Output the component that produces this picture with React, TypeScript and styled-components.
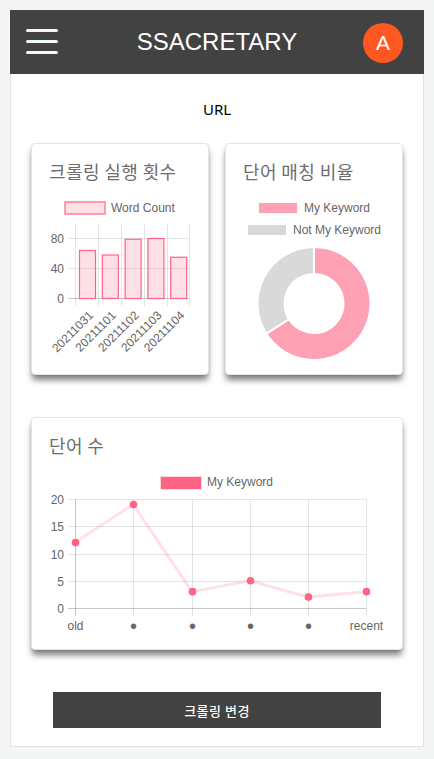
import React from "react";
import styled, { createGlobalStyle } from "styled-components";

const GlobalStyle = createGlobalStyle`
  html, body { margin: 0; padding: 0; background: #f4f5f5; }
  body { padding: 10px; font-family: "Liberation Sans", Arial, sans-serif; }
  * { box-sizing: border-box; }
`;

const Frame = styled.div`
  width: 414px;
  background: #fff;
  border: 1px solid #e2e3e3;
  border-top: none;
  display: flex;
  flex-direction: column;
`;

const Header = styled.header`
  height: 64px;
  background: #424242;
  margin: 0 -1px;
  display: flex;
  align-items: center;
  justify-content: space-between;
  padding: 0 21px 0 16px;
  position: relative;
`;

const Burger = styled.div`
  width: 32px;
  display: flex;
  flex-direction: column;
  gap: 8px;
  margin-top: -1px;
`;

const BurgerLine = styled.span`
  display: block;
  height: 3px;
  border-radius: 2px;
  background: #eefafa;
`;

const Brand = styled.h1`
  position: absolute;
  left: 0;
  right: 0;
  text-align: center;
  margin: 0;
  font-family: "Liberation Sans", Arial, sans-serif;
  font-weight: 400;
  font-size: 24px;
  color: #fff;
  pointer-events: none;
`;

const Avatar = styled.div`
  width: 40px;
  height: 40px;
  border-radius: 50%;
  background: #ff5722;
  color: #fff;
  display: flex;
  align-items: center;
  justify-content: center;
  font-family: "Liberation Sans", Arial, sans-serif;
  font-size: 21px;
  margin-top: 1px;
`;

const Content = styled.main`
  padding: 25px 20px 18px;
  display: flex;
  flex-direction: column;
`;

const UrlText = styled.div`
  text-align: center;
  font-family: "Noto Sans", "Open Sans", sans-serif;
  font-size: 15px;
  line-height: 20px;
  color: #000;
`;

const Row = styled.div`
  display: grid;
  grid-template-columns: 178px 178px;
  gap: 16px;
  margin-top: 24px;
`;

const Card = styled.section<{ $height: number; $mt?: number }>`
  height: ${(p) => p.$height}px;
  margin-top: ${(p) => p.$mt ?? 0}px;
  background: #fff;
  border: 1px solid #e4e4e4;
  border-radius: 4px;
  box-shadow: 0 6px 6px -1px rgba(0, 0, 0, 0.5), 0 1px 2px rgba(0, 0, 0, 0.08);
  padding-top: 15px;
  display: flex;
  flex-direction: column;
  overflow: visible;
`;

const CardTitle = styled.h2`
  margin: 0 0 12px 17px;
  font-family: "Noto Sans CJK KR", "Noto Sans", sans-serif;
  font-weight: 400;
  font-size: 18px;
  line-height: 24px;
  color: #6e6e6e;
  letter-spacing: 0.4px;
`;

const ChartSvg = styled.svg`
  display: block;
  margin-left: -1px;
  font-family: "Liberation Sans", Arial, sans-serif;
  font-size: 12px;
  overflow: visible;
`;

const Button = styled.button`
  margin: 42px 22px 0;
  height: 36px;
  border: none;
  background: #424242;
  color: #fff;
  font-family: "Noto Sans CJK KR", "Noto Sans", sans-serif;
  font-size: 13px;
  font-weight: 500;
  letter-spacing: 0.5px;
  cursor: pointer;
`;

const TXT = "#666";
const GRID = "rgba(0,0,0,0.1)";
const AXIS = "rgba(0,0,0,0.22)";
const PINK = "#ff6384";
const PINK_LIGHT = "rgba(255,99,132,0.2)";

function BarChart() {
  const vals = [64, 58, 79, 80, 55];
  const labels = ["20211031", "20211101", "20211102", "20211103", "20211104"];
  const vx = [44, 67, 90, 113, 136, 158];
  const base = 103;
  const k = 60 / 80;
  return (
    <ChartSvg width={178} height={180}>
      <rect x={34} y={7} width={40} height={12} fill={PINK_LIGHT} stroke={PINK} strokeOpacity={0.6} strokeWidth={2} />
      <text x={80} y={17} fill={TXT}>Word Count</text>
      {[0, 40, 80].map((v) => {
        const y = base - v * k;
        return (
          <g key={v}>
            <line x1={37} x2={158} y1={y + 0.5} y2={y + 0.5} stroke={v === 0 ? AXIS : GRID} />
            <text x={33} y={y + 4.5} fill={TXT} textAnchor="end">{v}</text>
          </g>
        );
      })}
      {vx.map((x, i) => (
        <line key={i} x1={x + 0.5} x2={x + 0.5} y1={29} y2={111} stroke={GRID} />
      ))}
      {vals.map((v, i) => {
        const x = 48 + i * 22.8;
        const top = base - v * k;
        return (
          <rect key={i} x={x + 0.5} y={top + 0.5} width={16} height={base - top} fill={PINK_LIGHT} stroke={PINK} strokeWidth={1.2} />
        );
      })}
      {labels.map((l, i) => {
        const cx = 56 + i * 22.8;
        return (
          <text key={l} transform={`translate(${cx + 7} ${121}) rotate(-45)`} textAnchor="end" fill={TXT}>{l}</text>
        );
      })}
    </ChartSvg>
  );
}

function arcPath(cx: number, cy: number, R: number, r: number, a0: number, a1: number) {
  const rad = (d: number) => (d * Math.PI) / 180;
  const pt = (rr: number, a: number) => [cx + rr * Math.sin(rad(a)), cy - rr * Math.cos(rad(a))];
  const [x0, y0] = pt(R, a0);
  const [x1, y1] = pt(R, a1);
  const [x2, y2] = pt(r, a1);
  const [x3, y3] = pt(r, a0);
  const large = a1 - a0 > 180 ? 1 : 0;
  return `M ${x0} ${y0} A ${R} ${R} 0 ${large} 1 ${x1} ${y1} L ${x2} ${y2} A ${r} ${r} 0 ${large} 0 ${x3} ${y3} Z`;
}

function DonutChart() {
  const split = 237.8;
  return (
    <ChartSvg width={178} height={180}>
      <rect x={34} y={8} width={38} height={10} fill="#ffa1b5" />
      <text x={79} y={17} fill={TXT}>My Keyword</text>
      <rect x={23} y={30} width={38} height={10} fill="#d9d9d9" />
      <text x={68} y={39} fill={TXT}>Not My Keyword</text>
      <path d={arcPath(89, 108.5, 56.5, 29.5, 0, split)} fill="#ffa1b5" stroke="#fff" strokeWidth={2} />
      <path d={arcPath(89, 108.5, 56.5, 29.5, split, 360)} fill="#d9d9d9" stroke="#fff" strokeWidth={2} />
    </ChartSvg>
  );
}

function LineChart() {
  const vals = [12, 19, 3, 5, 2, 3];
  const xs = [44, 102, 161, 219, 277, 335];
  const zero = 139;
  const k = 5.45;
  const pts = vals.map((v, i) => [xs[i], zero - v * k]);
  const labels = ["old", "•", "•", "•", "•", "recent"];
  return (
    <ChartSvg width={372} height={181}>
      <rect x={130} y={8} width={40} height={12} fill={PINK} stroke="rgba(255,99,132,0.25)" strokeWidth={2} />
      <text x={176} y={17} fill={TXT}>My Keyword</text>
      {[0, 5, 10, 15, 20].map((v) => {
        const y = Math.round(zero - v * k);
        return (
          <g key={v}>
            <line x1={37} x2={335} y1={y + 0.5} y2={y + 0.5} stroke={v === 0 ? AXIS : GRID} />
            <text x={33} y={y + 4.5} fill={TXT} textAnchor="end">{v}</text>
          </g>
        );
      })}
      {xs.map((x, i) => (
        <line key={i} x1={x + 0.5} x2={x + 0.5} y1={30} y2={147} stroke={i === 0 ? AXIS : GRID} />
      ))}
      <polyline points={pts.map((p) => p.join(",")).join(" ")} fill="none" stroke={PINK_LIGHT} strokeWidth={3} strokeLinejoin="round" />
      {pts.map(([x, y], i) => (
        <circle key={i} cx={x + 0.5} cy={y} r={3.8} fill={PINK} />
      ))}
      {labels.map((l, i) => {
        const edge = i === 0 || i === 5;
        return (
          <text key={i} x={xs[i] + 0.5} y={edge ? 161 : 163.5} textAnchor="middle" fill={TXT} fontSize={edge ? 12 : 20}>{l}</text>
        );
      })}
    </ChartSvg>
  );
}

export default function App() {
  return (
    <>
      <GlobalStyle />
      <Frame>
        <Header>
          <Burger>
            <BurgerLine />
            <BurgerLine />
            <BurgerLine />
          </Burger>
          <Brand>SSACRETARY</Brand>
          <Avatar>A</Avatar>
        </Header>
        <Content>
          <UrlText>URL</UrlText>
          <Row>
            <Card $height={232}>
              <CardTitle>크롤링 실행 횟수</CardTitle>
              <BarChart />
            </Card>
            <Card $height={232}>
              <CardTitle>단어 매칭 비율</CardTitle>
              <DonutChart />
            </Card>
          </Row>
          <Card $height={233} $mt={42}>
            <CardTitle>단어 수</CardTitle>
            <LineChart />
          </Card>
          <Button>크롤링 변경</Button>
        </Content>
      </Frame>
    </>
  );
}
